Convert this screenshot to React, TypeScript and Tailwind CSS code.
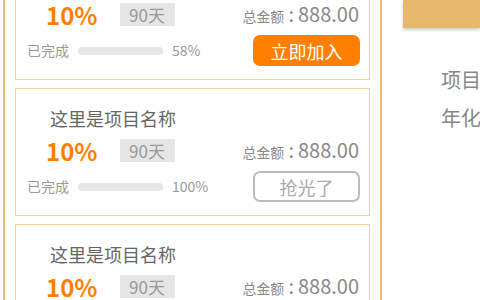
const projects = [
  { name: "这里是项目名称", rate: "10%", days: "90", total: "888.00", done: "58%", progress: 58, soldOut: false },
  { name: "这里是项目名称", rate: "10%", days: "90", total: "888.00", done: "100%", progress: 100, soldOut: true },
  { name: "这里是项目名称", rate: "10%", days: "90", total: "888.00", done: "30%", progress: 30, soldOut: false },
];

function ProjectCard({ p }: { p: (typeof projects)[number] }) {
  return (
    <div className="h-[128px] shrink-0 border border-[#f4d49c] bg-white flex flex-col pl-[11px] pr-[9px] pt-[17px]">
      <div className="ml-[23px] text-[18px] leading-[24px] text-[#666]">{p.name}</div>
      <div className="mt-[9px] h-[23px] flex items-center">
        <span className="ml-[19px] w-[74px] text-[24px] leading-none font-bold text-[#ff7f00]">{p.rate}</span>
        <span className="h-[23px] w-[55px] bg-[#e6e6e6] text-[#999] text-[17px] leading-[23px] pl-[9px]">
          {p.days}天
        </span>
        <span className="ml-auto mr-[1px] flex items-baseline text-[#888]">
          <span className="text-[14px]">总金额</span>
          <span className="text-[20px] leading-[23px] mx-[4px]">:</span>
          <span className="text-[20px] leading-[23px]">{p.total}</span>
        </span>
      </div>
      <div className="mt-[9px] h-[31px] flex items-center">
        <span className="text-[14px] text-[#999] w-[51px]">已完成</span>
        <div className="w-[85px] h-[8px] rounded-full bg-[#e6e6e6]" />
        <span className="ml-[9px] text-[14px] text-[#999]">{p.done}</span>
        {p.soldOut ? (
          <button className="ml-auto w-[107px] h-[31px] rounded-[7px] border-2 border-[#bbb] text-[#aaa] text-[18px] leading-none">
            抢光了
          </button>
        ) : (
          <button className="ml-auto w-[107px] h-[31px] rounded-[7px] bg-[#ff8000] text-white text-[18px] leading-none">
            立即加入
          </button>
        )}
      </div>
    </div>
  );
}

export default function App() {
  return (
    <main
      className="w-[480px] h-[300px] overflow-hidden bg-white flex"
      style={{ fontFamily: '"Noto Sans CJK SC", "Noto Sans", sans-serif' }}
    >
      <div className="ml-[3px] w-[379px] h-full shrink-0 border-l-2 border-r-2 border-[#e9bd70] px-[10px]">
        <div className="-mt-[48px] flex flex-col gap-[8px]">
          {projects.map((p, i) => (
            <ProjectCard key={i} p={p} />
          ))}
        </div>
      </div>
      <div className="flex-1 flex flex-col overflow-hidden">
        <div className="ml-[21px] h-[28px] bg-[#e5b96c] shadow-[0_2px_3px_rgba(0,0,0,0.2)]" />
        <div className="ml-[59px] mt-[33px] text-[20px] leading-[38px] text-[#888] whitespace-nowrap">
          <p>项目名称</p>
          <p>年化收益</p>
        </div>
      </div>
    </main>
  );
}
